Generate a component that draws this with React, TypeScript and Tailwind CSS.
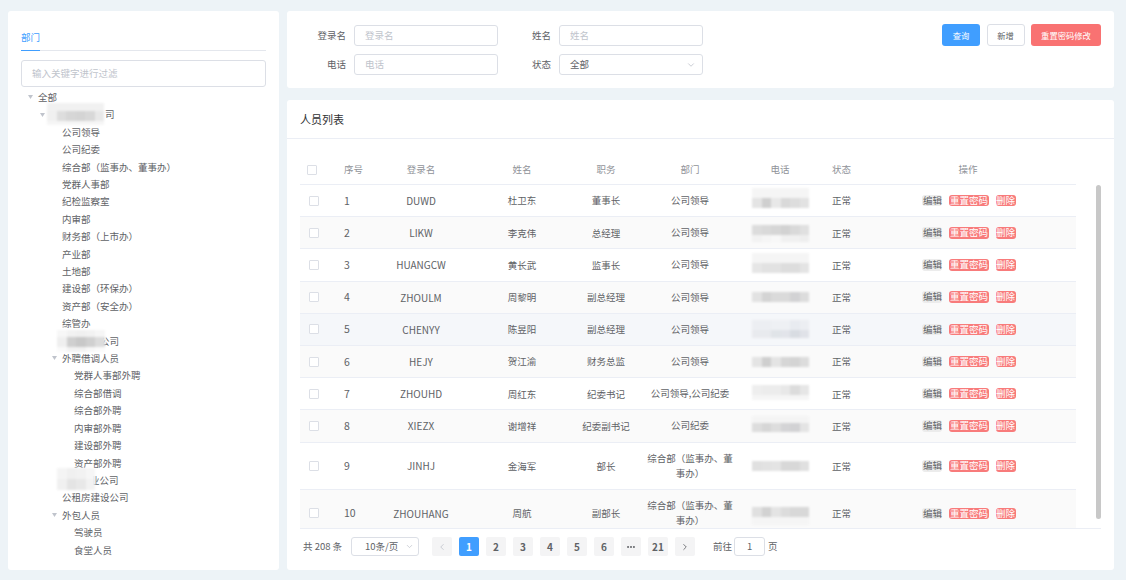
import { ChevronDown, ChevronLeft, ChevronRight, Ellipsis } from 'lucide-react'

type Band = { h: number; c: string[] }

const solid = (c: string, n = 6) => Array(n).fill(c) as string[]

// stand-in for the blurred-out phone numbers and company names
function Mosaic({ bands }: { bands: Band[] }) {
  return (
    <div className="flex flex-col blur-[0.8px]">
      {bands.map((band, i) => (
        <div key={i} className="flex" style={{ height: band.h }}>
          {band.c.map((color, j) => (
            <div key={j} className="w-[9.5px]" style={{ backgroundColor: color }} />
          ))}
        </div>
      ))}
    </div>
  )
}

const levels = ['pl-[18px]', 'pl-[30px]', 'pl-[42px]', 'pl-[54px]']

type TreeNode = {
  label: string
  level: number
  caret?: boolean
  textClass?: string
  maskClass?: string
  mask?: Band[]
}

const tree: TreeNode[] = [
  { label: '全部', level: 0, caret: true },
  {
    label: '司',
    level: 1,
    caret: true,
    textClass: 'ml-[55px]',
    maskClass: 'left-[39px] top-[-3px]',
    mask: [
      { h: 8, c: solid('#f1f1f1') },
      { h: 10, c: ['#f0f0f0', '#dddddd', '#d6d6d6', '#d4d4d4', '#d8d8d8', '#e8e8e8'] },
      { h: 4, c: solid('#f6f6f6') },
    ],
  },
  { label: '公司领导', level: 2 },
  { label: '公司纪委', level: 2 },
  { label: '综合部（监事办、董事办）', level: 2 },
  { label: '党群人事部', level: 2 },
  { label: '纪检监察室', level: 2 },
  { label: '内审部', level: 2 },
  { label: '财务部（上市办）', level: 2 },
  { label: '产业部', level: 2 },
  { label: '土地部', level: 2 },
  { label: '建设部（环保办）', level: 2 },
  { label: '资产部（安全办）', level: 2 },
  { label: '综管办', level: 2 },
  {
    label: '公司',
    level: 2,
    textClass: 'ml-[38px]',
    maskClass: 'left-[49px] top-[-2px]',
    mask: [
      { h: 7, c: ['#f7f7f7', '#f2f2f2', '#f0f0f0', '#f2f2f2', '#f6f6f6'] },
      { h: 10, c: ['#efefef', '#cfcfcf', '#c8c8c8', '#d0d0d0', '#dcdcdc'] },
      { h: 5, c: ['#fafafa', '#f2f2f2', '#f2f2f2', '#f8f8f8', '#fbfbfb'] },
    ],
  },
  { label: '外聘借调人员', level: 2, caret: true },
  { label: '党群人事部外聘', level: 3 },
  { label: '综合部借调', level: 3 },
  { label: '综合部外聘', level: 3 },
  { label: '内审部外聘', level: 3 },
  { label: '建设部外聘', level: 3 },
  { label: '资产部外聘', level: 3 },
  {
    label: '业公司',
    level: 2,
    textClass: 'ml-[28px]',
    maskClass: 'left-[49px] top-[-3px]',
    mask: [
      { h: 11, c: ['#f4f4f4', '#f0f0f0', '#f2f2f2', '#f6f6f6'] },
      { h: 11, c: ['#f0f0f0', '#e4e4e4', '#e8e8e8', '#f2f2f2'] },
    ],
  },
  { label: '公租房建设公司', level: 2 },
  { label: '外包人员', level: 2, caret: true },
  { label: '驾驶员', level: 3 },
  { label: '食堂人员', level: 3 },
]

const lightBlue = ['#eceef2', '#eceef2', '#eef0f4', '#eef0f4', '#e8ebf0', '#eceef2']

const people = [
  { id: 1, login: 'DUWD', name: '杜卫东', job: '董事长', dept: '公司领导', bg: 'bg-white', pad: 3, bands: [{ h: 10, c: solid('#f5f5f5') }, { h: 10, c: ['#e4e4e4', '#cfcfcf', '#e8e8e8', '#d9d9d9', '#dddddd', '#e2e2e2'] }] },
  { id: 2, login: 'LIKW', name: '李克伟', job: '总经理', dept: '公司领导', bg: 'bg-[#fafafa]', pad: 8, bands: [{ h: 10, c: ['#dcdcdc', '#d9d9d9', '#d6d6d6', '#d2d2d2', '#d9d9d9', '#e0e0e0'] }, { h: 7, c: ['#f2f2f2', '#f5f5f5', '#f8f8f8', '#f0f0f0', '#f0f0f0', '#eeeeee'] }] },
  { id: 3, login: 'HUANGCW', name: '黄长武', job: '监事长', dept: '公司领导', bg: 'bg-white', pad: 4, bands: [{ h: 10, c: solid('#f5f5f5') }, { h: 10, c: ['#e6e6e6', '#e2e2e2', '#e2e2e2', '#dddddd', '#dddddd', '#e4e4e4'] }] },
  { id: 4, login: 'ZHOULM', name: '周黎明', job: '副总经理', dept: '公司领导', bg: 'bg-[#fafafa]', pad: 10, bands: [{ h: 10, c: ['#e2e2e2', '#d4d4d4', '#dadada', '#dadada', '#d2d2d4', '#dcdcdc'] }] },
  { id: 5, login: 'CHENYY', name: '陈昱阳', job: '副总经理', dept: '公司领导', bg: 'bg-[#f5f7fa]', pad: 6, bands: [{ h: 10, c: lightBlue }, { h: 8, c: ['#e8eaee', '#e8eaee', '#e0e4e8', '#e2e4ea', '#d8dce2', '#e0e2e8'] }] },
  { id: 6, login: 'HEJY', name: '贺江渝', job: '财务总监', dept: '公司领导', bg: 'bg-[#fafafa]', pad: 11, bands: [{ h: 10, c: ['#e4e4e4', '#cfcfcf', '#e4e4e4', '#d6d6d6', '#d4d4d4', '#dcdcdc'] }] },
  { id: 7, login: 'ZHOUHD', name: '周红东', job: '纪委书记', dept: '公司领导,公司纪委', bg: 'bg-white', pad: 7, bands: [{ h: 10, c: ['#eeeeee', '#ececec', '#ececec', '#e8e8e8', '#dcdcdc', '#e6e6e6'] }, { h: 5, c: solid('#f5f5f5') }] },
  { id: 8, login: 'XIEZX', name: '谢增祥', job: '纪委副书记', dept: '公司纪委', bg: 'bg-[#fafafa]', pad: 6, bands: [{ h: 7, c: solid('#f4f4f4') }, { h: 9, c: ['#dddddd', '#d6d6d6', '#dddddd', '#d4d4d6', '#d2d2d4', '#e4e4e4'] }] },
  { id: 9, login: 'JINHJ', name: '金海军', job: '部长', dept: '综合部（监事办、董事办）', bg: 'bg-white', tall: true, pad: 18, bands: [{ h: 10, c: ['#e0e0e0', '#e2e2e2', '#e4e4e4', '#d8d8d8', '#d8d8d8', '#e0e0e0'] }] },
  { id: 10, login: 'ZHOUHANG', name: '周航', job: '副部长', dept: '综合部（监事办、董事办）', bg: 'bg-[#fafafa]', tall: true, pad: 17, bands: [{ h: 10, c: ['#e0e0e0', '#d2d2d2', '#e4e4e4', '#dcdcdc', '#d8d8d8', '#d8d8d8'] }, { h: 8, c: solid('#f5f5f5') }] },
]

const columns = 'grid grid-cols-[36px_30px_110px_92px_76px_92px_88px_36px_216px]'

const pages = ['2', '3', '4', '5', '6']

function Field({ label, placeholder }: { label: string; placeholder: string }) {
  return (
    <>
      <div className="text-right leading-[21px] text-[#606266]">{label}</div>
      <div className="flex h-[21px] items-center rounded-[3px] border border-[#dcdfe6] bg-white pl-[10px] text-[#c0c4cc]">
        {placeholder}
      </div>
    </>
  )
}

export default function App() {
  return (
    <div className="flex h-[580px] w-[1126px] gap-2 overflow-hidden bg-[#edf3f7] pl-2 pt-[11px] font-['Noto_Sans_CJK_SC','Noto_Sans',sans-serif] text-[9.5px] text-[#606266]">
      {/* Left: department tree */}
      <aside className="h-[559px] w-[271px] rounded-[3px] bg-white">
        <div className="mx-[13px] mt-[13px] h-[27px] border-b border-[#e4e7ed]">
          <div className="relative h-[27px] w-[19px] border-b border-[#409eff] pt-[6px] leading-[14px] text-[#409eff]">部门</div>
        </div>
        <div className="mx-[13px] mt-[9px] flex h-[27px] items-center rounded-[3px] border border-[#dcdfe6] pl-[10px] text-[#c0c4cc]">
          输入关键字进行过滤
        </div>
        <div className="mt-[1.4px]">
          {tree.map((node, i) => (
            <div key={i} className={'relative flex h-[17.42px] items-center ' + levels[node.level]}>
              <span className="flex w-3 items-center pl-[2px]">
                {node.caret && (
                  <svg width="5" height="4" viewBox="0 0 5 4">
                    <path d="M0 0h5L2.5 4z" fill="#c0c4cc" />
                  </svg>
                )}
              </span>
              <span className={node.textClass}>{node.label}</span>
              {node.mask && (
                <div className={'absolute ' + node.maskClass}>
                  <Mosaic bands={node.mask} />
                </div>
              )}
            </div>
          ))}
        </div>
      </aside>

      <main className="flex w-[827px] flex-col gap-3">
        {/* Filters */}
        <section className="flex h-[77px] justify-between rounded-[3px] bg-white pl-2 pr-[13px] pt-[14px]">
          <div className="grid grid-cols-[51px_144px_45px_144px] content-start gap-x-2 gap-y-2">
            <Field label="登录名" placeholder="登录名" />
            <Field label="姓名" placeholder="姓名" />
            <Field label="电话" placeholder="电话" />
            <div className="text-right leading-[21px]">状态</div>
            <div className="flex h-[21px] items-center justify-between rounded-[3px] border border-[#dcdfe6] pl-[10px] pr-[6px]">
              全部
              <ChevronDown size={10} className="text-[#c0c4cc]" />
            </div>
          </div>
          <div className="-mt-[1px] flex h-[22px] gap-[6.5px] text-[8.3px]">
            <button className="w-[38px] rounded-[3px] bg-[#409eff] text-white">查询</button>
            <button className="w-[38px] rounded-[3px] border border-[#dcdfe6] bg-white">新增</button>
            <button className="w-[70px] rounded-[3px] bg-[#f97272] text-white">重置密码修改</button>
          </div>
        </section>

        {/* Person list */}
        <section className="flex h-[470px] flex-col rounded-[3px] bg-white">
          <h2 className="flex h-[39px] items-center border-b border-[#ebeef5] pl-[13px] text-[11px] font-normal text-[#303133]">
            人员列表
          </h2>

          <div className="mx-[13px] mt-4 w-[801px] border-b border-[#ebeef5]">
            <div className={columns + ' h-[30px] w-[776px] items-center border-b border-[#ebeef5] text-center text-[#909399]'}>
              <div className="pl-[7px]">
                <div className="h-[10px] w-[10px] rounded-[1px] border border-[#dcdfe6]" />
              </div>
              <div className="pl-2 text-left">序号</div>
              <div>登录名</div>
              <div>姓名</div>
              <div>职务</div>
              <div>部门</div>
              <div>电话</div>
              <div className="pl-2 text-left">状态</div>
              <div>操作</div>
            </div>

            <div className="relative h-[343px] overflow-hidden">
              {people.map((p) => (
                <div
                  key={p.id}
                  className={columns + ' w-[776px] items-center border-b border-[#ebeef5] text-center ' + p.bg + ' ' + (p.tall ? 'h-[47.5px]' : 'h-[32.2px]')}
                >
                  <div className="pl-[9px]">
                    <div className="h-[10px] w-[10px] rounded-[1px] border border-[#dcdfe6] bg-white" />
                  </div>
                  <div className="pl-2 text-left text-[10.5px]">{p.id}</div>
                  <div className="text-[10px]">{p.login}</div>
                  <div>{p.name}</div>
                  <div>{p.job}</div>
                  <div className="px-[2px] leading-[15px]">{p.dept}</div>
                  <div className="h-full self-start pl-4" style={{ paddingTop: p.pad }}>
                    <Mosaic bands={p.bands} />
                  </div>
                  <div className="pl-2 text-left">正常</div>
                  <div className="flex items-center justify-center gap-[7px] pl-[2px] leading-[11.5px]">
                    <span className="rounded-[3px] bg-[#ececec] px-[0.5px]">编辑</span>
                    <span className="rounded-[3px] bg-[#f87b7b] px-[0.5px] text-white">重置密码</span>
                    <span className="rounded-[3px] bg-[#f87b7b] px-[0.5px] text-white">删除</span>
                  </div>
                </div>
              ))}
              <div className="absolute left-[796px] top-0 h-[334px] w-[5px] rounded-[3px] bg-[#c8c8c8]" />
            </div>
          </div>

          {/* Pagination */}
          <div className="ml-4 mt-[8px] flex h-[19px] items-center">
            <span className="w-[48px]">共 208 条</span>
            <div className="flex h-[19px] w-[68px] items-center justify-between rounded-[3px] border border-[#dcdfe6] pl-[13px] pr-[4px]">
              10条/页
              <ChevronDown size={9} className="text-[#c0c4cc]" />
            </div>
            <div className="ml-[13px] flex gap-[7px] text-[10px] font-bold">
              <div className="flex h-[19px] w-5 items-center justify-center rounded-[2px] bg-[#f4f4f5] text-[#c0c4cc]">
                <ChevronLeft size={10} />
              </div>
              <div className="flex h-[19px] w-5 items-center justify-center rounded-[2px] bg-[#409eff] text-white">1</div>
              {pages.map((n) => (
                <div key={n} className="flex h-[19px] w-5 items-center justify-center rounded-[2px] bg-[#f4f4f5]">{n}</div>
              ))}
              <div className="flex h-[19px] w-5 items-center justify-center rounded-[2px] bg-[#f4f4f5]">
                <Ellipsis size={10} strokeWidth={3} />
              </div>
              <div className="flex h-[19px] w-5 items-center justify-center rounded-[2px] bg-[#f4f4f5]">21</div>
              <div className="flex h-[19px] w-5 items-center justify-center rounded-[2px] bg-[#f4f4f5]">
                <ChevronRight size={10} />
              </div>
            </div>
            <span className="ml-[18px]">前往</span>
            <div className="ml-[2px] flex h-[19px] w-[31px] items-center justify-center rounded-[3px] border border-[#dcdfe6]">1</div>
            <span className="ml-[3px]">页</span>
          </div>
        </section>
      </main>
    </div>
  )
}
